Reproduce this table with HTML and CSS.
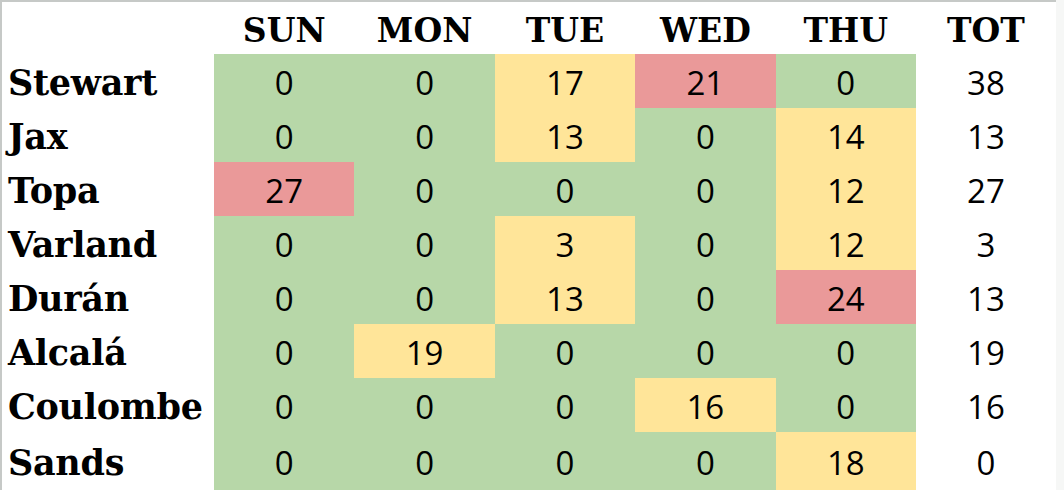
FILE: index.html
```html
<!DOCTYPE html>
<html>
<head>
<meta charset="utf-8">
<link rel="stylesheet" href="styles.css">
</head>
<body>
<div class="sheet">
  <div class="grid">
    <div class="hd"></div>
    <div class="hd">SUN</div>
    <div class="hd">MON</div>
    <div class="hd">TUE</div>
    <div class="hd">WED</div>
    <div class="hd">THU</div>
    <div class="hd">TOT</div>

    <div class="nm">Stewart</div>
    <div class="c g">0</div><div class="c g">0</div><div class="c y">17</div><div class="c r">21</div><div class="c g">0</div><div class="c t">38</div>

    <div class="nm">Jax</div>
    <div class="c g">0</div><div class="c g">0</div><div class="c y">13</div><div class="c g">0</div><div class="c y">14</div><div class="c t">13</div>

    <div class="nm">Topa</div>
    <div class="c r">27</div><div class="c g">0</div><div class="c g">0</div><div class="c g">0</div><div class="c y">12</div><div class="c t">27</div>

    <div class="nm">Varland</div>
    <div class="c g">0</div><div class="c g">0</div><div class="c y">3</div><div class="c g">0</div><div class="c y">12</div><div class="c t">3</div>

    <div class="nm">Durán</div>
    <div class="c g">0</div><div class="c g">0</div><div class="c y">13</div><div class="c g">0</div><div class="c r">24</div><div class="c t">13</div>

    <div class="nm">Alcalá</div>
    <div class="c g">0</div><div class="c y">19</div><div class="c g">0</div><div class="c g">0</div><div class="c g">0</div><div class="c t">19</div>

    <div class="nm">Coulombe</div>
    <div class="c g">0</div><div class="c g">0</div><div class="c g">0</div><div class="c y">16</div><div class="c g">0</div><div class="c t">16</div>

    <div class="nm">Sands</div>
    <div class="c g">0</div><div class="c g">0</div><div class="c g">0</div><div class="c g">0</div><div class="c y">18</div><div class="c t">0</div>
  </div>
</div>
</body>
</html>
```

FILE: styles.css
```css
html, body {
  margin: 0;
  padding: 0;
  background: #f6f7f6;
  height: 490px;
  overflow: hidden;
}

.sheet {
  width: 1054px;
  height: 488px;
  background: #ffffff;
  border-top: 2px solid #c6c9c7;
  border-left: 2px solid #c6c9c7;
}

.grid {
  display: grid;
  grid-template-columns: 212px repeat(5, 140.4px) 140px;
  grid-template-rows: 52px repeat(7, 54px) 58px;
}

.hd {
  display: flex;
  align-items: center;
  justify-content: center;
  padding-top: 4px;
  font-family: "DejaVu Serif", serif;
  font-weight: bold;
  font-size: 33px;
  color: #000;
}

.nm {
  display: flex;
  align-items: center;
  padding-left: 6px;
  padding-top: 2px;
  font-family: "DejaVu Serif", serif;
  font-weight: bold;
  font-size: 35px;
  letter-spacing: -0.3px;
  color: #000;
}

.c {
  display: flex;
  align-items: center;
  justify-content: center;
  padding-top: 2px;
  font-family: "Open Sans", "Noto Sans", sans-serif;
  font-weight: 500;
  font-size: 33px;
  color: #000;
}

.g { background: #b7d7a8; }
.y { background: #ffe599; }
.r { background: #ea9999; }
.t { background: #ffffff; }
```
